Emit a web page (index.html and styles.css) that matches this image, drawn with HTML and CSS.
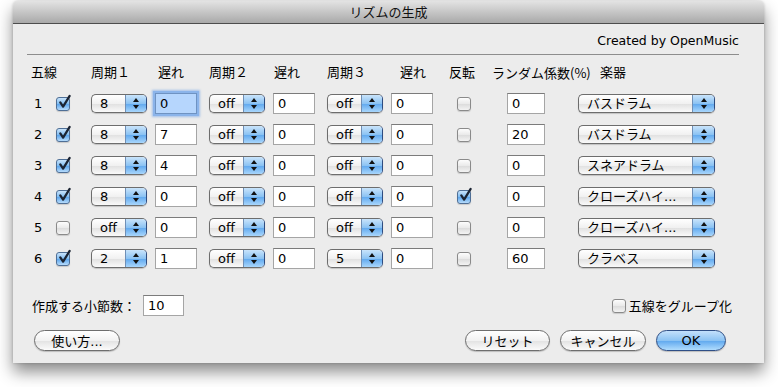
FILE: index.html
```html
<!DOCTYPE html>
<html lang="ja">
  <head>
    <meta charset="utf-8" />
    <title>リズムの生成</title>
    <link rel="stylesheet" href="styles.css">
  </head>
  <body>
    <div class="window">
      <div class="titlebar">リズムの生成</div>
      <div class="content">
        <div class="credit">Created by OpenMusic</div>
        <div class="rule"></div>

        <div class="grid">
          <div class="head">五線</div>
          <div class="head"></div>
          <div class="head">周期１</div>
          <div class="head pad3">遅れ</div>
          <div class="head">周期２</div>
          <div class="head pad1">遅れ</div>
          <div class="head">周期３</div>
          <div class="head pad9">遅れ</div>
          <div class="head">反転</div>
          <div class="head pad1 cjk">ランダム係数(%)</div>
          <div class="head pad22">楽器</div>

          <!-- row 1 -->
          <div class="num">1</div>
          <div class="cell"><span class="check on"><svg viewBox="0 0 16 16"><path d="M3.5 8.5 L6.5 13 L13.5 1.5" /></svg></span></div>
          <div class="cell"><div class="popup"><span class="val">8</span><span class="arrows"></span></div></div>
          <div class="cell"><div class="field focus">0</div></div>
          <div class="cell"><div class="popup"><span class="val">off</span><span class="arrows"></span></div></div>
          <div class="cell"><div class="field">0</div></div>
          <div class="cell"><div class="popup"><span class="val">off</span><span class="arrows"></span></div></div>
          <div class="cell"><div class="field">0</div></div>
          <div class="cell inv"><span class="check"></span></div>
          <div class="cell rnd"><div class="field short">0</div></div>
          <div class="cell"><div class="popup wide"><span class="val">バスドラム</span><span class="arrows"></span></div></div>

          <!-- row 2 -->
          <div class="num">2</div>
          <div class="cell"><span class="check on"><svg viewBox="0 0 16 16"><path d="M3.5 8.5 L6.5 13 L13.5 1.5" /></svg></span></div>
          <div class="cell"><div class="popup"><span class="val">8</span><span class="arrows"></span></div></div>
          <div class="cell"><div class="field">7</div></div>
          <div class="cell"><div class="popup"><span class="val">off</span><span class="arrows"></span></div></div>
          <div class="cell"><div class="field">0</div></div>
          <div class="cell"><div class="popup"><span class="val">off</span><span class="arrows"></span></div></div>
          <div class="cell"><div class="field">0</div></div>
          <div class="cell inv"><span class="check"></span></div>
          <div class="cell rnd"><div class="field short">20</div></div>
          <div class="cell"><div class="popup wide"><span class="val">バスドラム</span><span class="arrows"></span></div></div>

          <!-- row 3 -->
          <div class="num">3</div>
          <div class="cell"><span class="check on"><svg viewBox="0 0 16 16"><path d="M3.5 8.5 L6.5 13 L13.5 1.5" /></svg></span></div>
          <div class="cell"><div class="popup"><span class="val">8</span><span class="arrows"></span></div></div>
          <div class="cell"><div class="field">4</div></div>
          <div class="cell"><div class="popup"><span class="val">off</span><span class="arrows"></span></div></div>
          <div class="cell"><div class="field">0</div></div>
          <div class="cell"><div class="popup"><span class="val">off</span><span class="arrows"></span></div></div>
          <div class="cell"><div class="field">0</div></div>
          <div class="cell inv"><span class="check"></span></div>
          <div class="cell rnd"><div class="field short">0</div></div>
          <div class="cell"><div class="popup wide"><span class="val">スネアドラム</span><span class="arrows"></span></div></div>

          <!-- row 4 -->
          <div class="num">4</div>
          <div class="cell"><span class="check on"><svg viewBox="0 0 16 16"><path d="M3.5 8.5 L6.5 13 L13.5 1.5" /></svg></span></div>
          <div class="cell"><div class="popup"><span class="val">8</span><span class="arrows"></span></div></div>
          <div class="cell"><div class="field">0</div></div>
          <div class="cell"><div class="popup"><span class="val">off</span><span class="arrows"></span></div></div>
          <div class="cell"><div class="field">0</div></div>
          <div class="cell"><div class="popup"><span class="val">off</span><span class="arrows"></span></div></div>
          <div class="cell"><div class="field">0</div></div>
          <div class="cell inv"><span class="check on"><svg viewBox="0 0 16 16"><path d="M3.5 8.5 L6.5 13 L13.5 1.5" /></svg></span></div>
          <div class="cell rnd"><div class="field short">0</div></div>
          <div class="cell"><div class="popup wide"><span class="val">クローズハイ...</span><span class="arrows"></span></div></div>

          <!-- row 5 -->
          <div class="num">5</div>
          <div class="cell"><span class="check"></span></div>
          <div class="cell"><div class="popup"><span class="val">off</span><span class="arrows"></span></div></div>
          <div class="cell"><div class="field">0</div></div>
          <div class="cell"><div class="popup"><span class="val">off</span><span class="arrows"></span></div></div>
          <div class="cell"><div class="field">0</div></div>
          <div class="cell"><div class="popup"><span class="val">off</span><span class="arrows"></span></div></div>
          <div class="cell"><div class="field">0</div></div>
          <div class="cell inv"><span class="check"></span></div>
          <div class="cell rnd"><div class="field short">0</div></div>
          <div class="cell"><div class="popup wide"><span class="val">クローズハイ...</span><span class="arrows"></span></div></div>

          <!-- row 6 -->
          <div class="num">6</div>
          <div class="cell"><span class="check on"><svg viewBox="0 0 16 16"><path d="M3.5 8.5 L6.5 13 L13.5 1.5" /></svg></span></div>
          <div class="cell"><div class="popup"><span class="val">2</span><span class="arrows"></span></div></div>
          <div class="cell"><div class="field">1</div></div>
          <div class="cell"><div class="popup"><span class="val">off</span><span class="arrows"></span></div></div>
          <div class="cell"><div class="field">0</div></div>
          <div class="cell"><div class="popup"><span class="val">5</span><span class="arrows"></span></div></div>
          <div class="cell"><div class="field">0</div></div>
          <div class="cell inv"><span class="check"></span></div>
          <div class="cell rnd"><div class="field short">60</div></div>
          <div class="cell"><div class="popup wide"><span class="val">クラベス</span><span class="arrows"></span></div></div>
        </div>

        <div class="footer">
          <div class="measures">
            <span class="label">作成する小節数：</span>
            <div class="field">10</div>
          </div>
          <label class="group">
            <span class="check"></span>
            <span>五線をグループ化</span>
          </label>
        </div>

        <div class="buttons">
          <button class="btn help">使い方...</button>
          <div class="actions">
            <button class="btn reset">リセット</button>
            <button class="btn cancel">キャンセル</button>
            <button class="btn ok">OK</button>
          </div>
        </div>
      </div>
    </div>
  </body>
</html>
```

FILE: styles.css
```css
html,
body {
  width: 100%;
  height: 100%;
}

body {
  margin: 0;
  background-color: #fff;
  font-family: "DejaVu Sans", "Noto Sans CJK JP", sans-serif;
  font-size: 12px;
  color: #000;
}

.window {
  width: 751px;
  margin: 1px 0 0 13px;
  background-color: #ececec;
  border-radius: 5px 5px 0 0;
  box-shadow: 0 9px 16px rgba(0, 0, 0, 0.45), 0 0 3px rgba(0, 0, 0, 0.2);
}

.titlebar {
  height: 22px;
  line-height: 22px;
  text-align: center;
  font-family: "Noto Sans CJK JP", sans-serif;
  font-size: 13px;
  color: #111;
  border-bottom: 1px solid #4d4d4d;
  border-radius: 5px 5px 0 0;
  background: linear-gradient(#e3e3e3, #c9c9c9 45%, #a9a9a9);
}

.content {
  padding: 9px 25px 12px 14px;
}

.credit {
  height: 16px;
  line-height: 16px;
  text-align: right;
  font-size: 12.5px;
}

.rule {
  margin-top: 5px;
  border-top: 1px solid #8d8d8d;
}

.grid {
  display: grid;
  grid-template-columns: 22px 36px 64px 54px 64px 54px 64px 58px 42px 87px 137px;
  grid-template-rows: 24px repeat(6, 31px);
  margin: 9px 0 0 6px;
}

.head {
  align-self: start;
  line-height: 18px;
  font-size: 13px;
  white-space: nowrap;
}

.head.cjk {
  font-family: "Noto Sans CJK JP", sans-serif;
}

.head:first-child {
  margin-left: -2px;
}

.pad1 { padding-left: 1px; }
.pad3 { padding-left: 3px; }
.pad9 { padding-left: 9px; }
.pad22 { padding-left: 22px; }

.num {
  align-self: center;
  padding-left: 1px;
  font-size: 13px;
}

.cell {
  display: flex;
  align-items: center;
}

.cell.inv {
  padding-left: 7px;
}

.cell.rnd {
  padding-left: 16px;
}

/* checkbox */
.check {
  position: relative;
  display: inline-block;
  width: 12px;
  height: 12px;
  margin-left: 1px;
  border: 1px solid #8a8a8a;
  border-radius: 3px;
  background: linear-gradient(#fdfdfd, #e9e9e9 50%, #dcdcdc 51%, #f3f3f3);
  box-shadow: 0 1px 1px rgba(0, 0, 0, 0.15);
}

.check.on {
  border-color: #4f6f96;
  background: linear-gradient(#c8e3fb, #7dbbf1 50%, #5aa4ec 51%, #b6dbfb);
}

.check svg {
  position: absolute;
  left: 0;
  top: -4px;
  width: 15px;
  height: 16px;
  overflow: visible;
}

.check svg path {
  fill: none;
  stroke: #1b2433;
  stroke-width: 2.4;
  stroke-linecap: round;
  stroke-linejoin: round;
}

/* popup */
.popup {
  display: flex;
  width: 56px;
  height: 19px;
  box-sizing: border-box;
  border: 1px solid #6d6d6d;
  border-right-color: #2e4c80;
  border-radius: 5px;
  overflow: hidden;
  background: linear-gradient(#ffffff, #f1f1f1 50%, #e0e0e0 51%, #fafafa);
  box-shadow: 0 1px 1px rgba(0, 0, 0, 0.18);
}

.popup.wide {
  width: 137px;
}

.popup .val {
  flex: 1;
  padding-left: 8px;
  line-height: 17px;
  font-size: 13px;
  white-space: nowrap;
  overflow: hidden;
}

.popup .arrows {
  position: relative;
  width: 20px;
  border-left: 1px solid #6f8fb6;
  background: linear-gradient(#c9e4fb, #8cc3f3 50%, #5ea7ee 51%, #a8d6fc);
}

.popup.wide .arrows {
  width: 21px;
}

.popup .arrows::before,
.popup .arrows::after {
  content: "";
  position: absolute;
  left: 50%;
  margin-left: -3px;
  border-left: 3px solid transparent;
  border-right: 3px solid transparent;
}

.popup .arrows::before {
  top: 3px;
  border-bottom: 4px solid #111;
}

.popup .arrows::after {
  bottom: 3px;
  border-top: 4px solid #111;
}

/* text field */
.field {
  width: 42px;
  height: 21px;
  box-sizing: border-box;
  padding-left: 4px;
  line-height: 19px;
  font-size: 13px;
  background-color: #fff;
  border: 1px solid #a5a5a5;
  border-top-color: #7b7b7b;
}

.field.short {
  width: 38px;
}

.field.focus {
  background-color: #b6d6fd;
  border-color: #6f93c2;
  box-shadow: 0 0 0 2px #8bb4ea, 0 0 2px 3px rgba(110, 160, 230, 0.6);
}

/* footer */
.footer {
  display: flex;
  justify-content: space-between;
  align-items: center;
  margin: 21px 7px 0 6px;
}

.measures {
  display: flex;
  align-items: center;
}

.measures .label {
  margin-left: -1px;
  width: 111px;
  font-size: 13px;
}

.measures .field {
  width: 41px;
}

.group {
  display: flex;
  align-items: center;
  gap: 3px;
  font-size: 13px;
}

.buttons {
  display: flex;
  justify-content: space-between;
  align-items: center;
  margin: 14px 13px 0 7px;
}

.actions {
  display: flex;
  gap: 10px;
}

.btn {
  height: 21px;
  padding: 0;
  border: 1px solid #6e6e6e;
  border-radius: 11px;
  background: linear-gradient(#ffffff, #f2f2f2 50%, #e2e2e2 51%, #fbfbfb);
  box-shadow: 0 1px 1px rgba(0, 0, 0, 0.2);
  font-family: "DejaVu Sans", "Noto Sans CJK JP", sans-serif;
  font-size: 13px;
  color: #000;
}

.btn.help { width: 86px; }
.btn.reset { width: 85px; }
.btn.cancel { width: 86px; }

.btn.ok {
  width: 70px;
  border-color: #2f4f86;
  background: linear-gradient(#c3e0fb, #8cc3f3 50%, #5ea7ee 51%, #b0dcfd);
}
```
